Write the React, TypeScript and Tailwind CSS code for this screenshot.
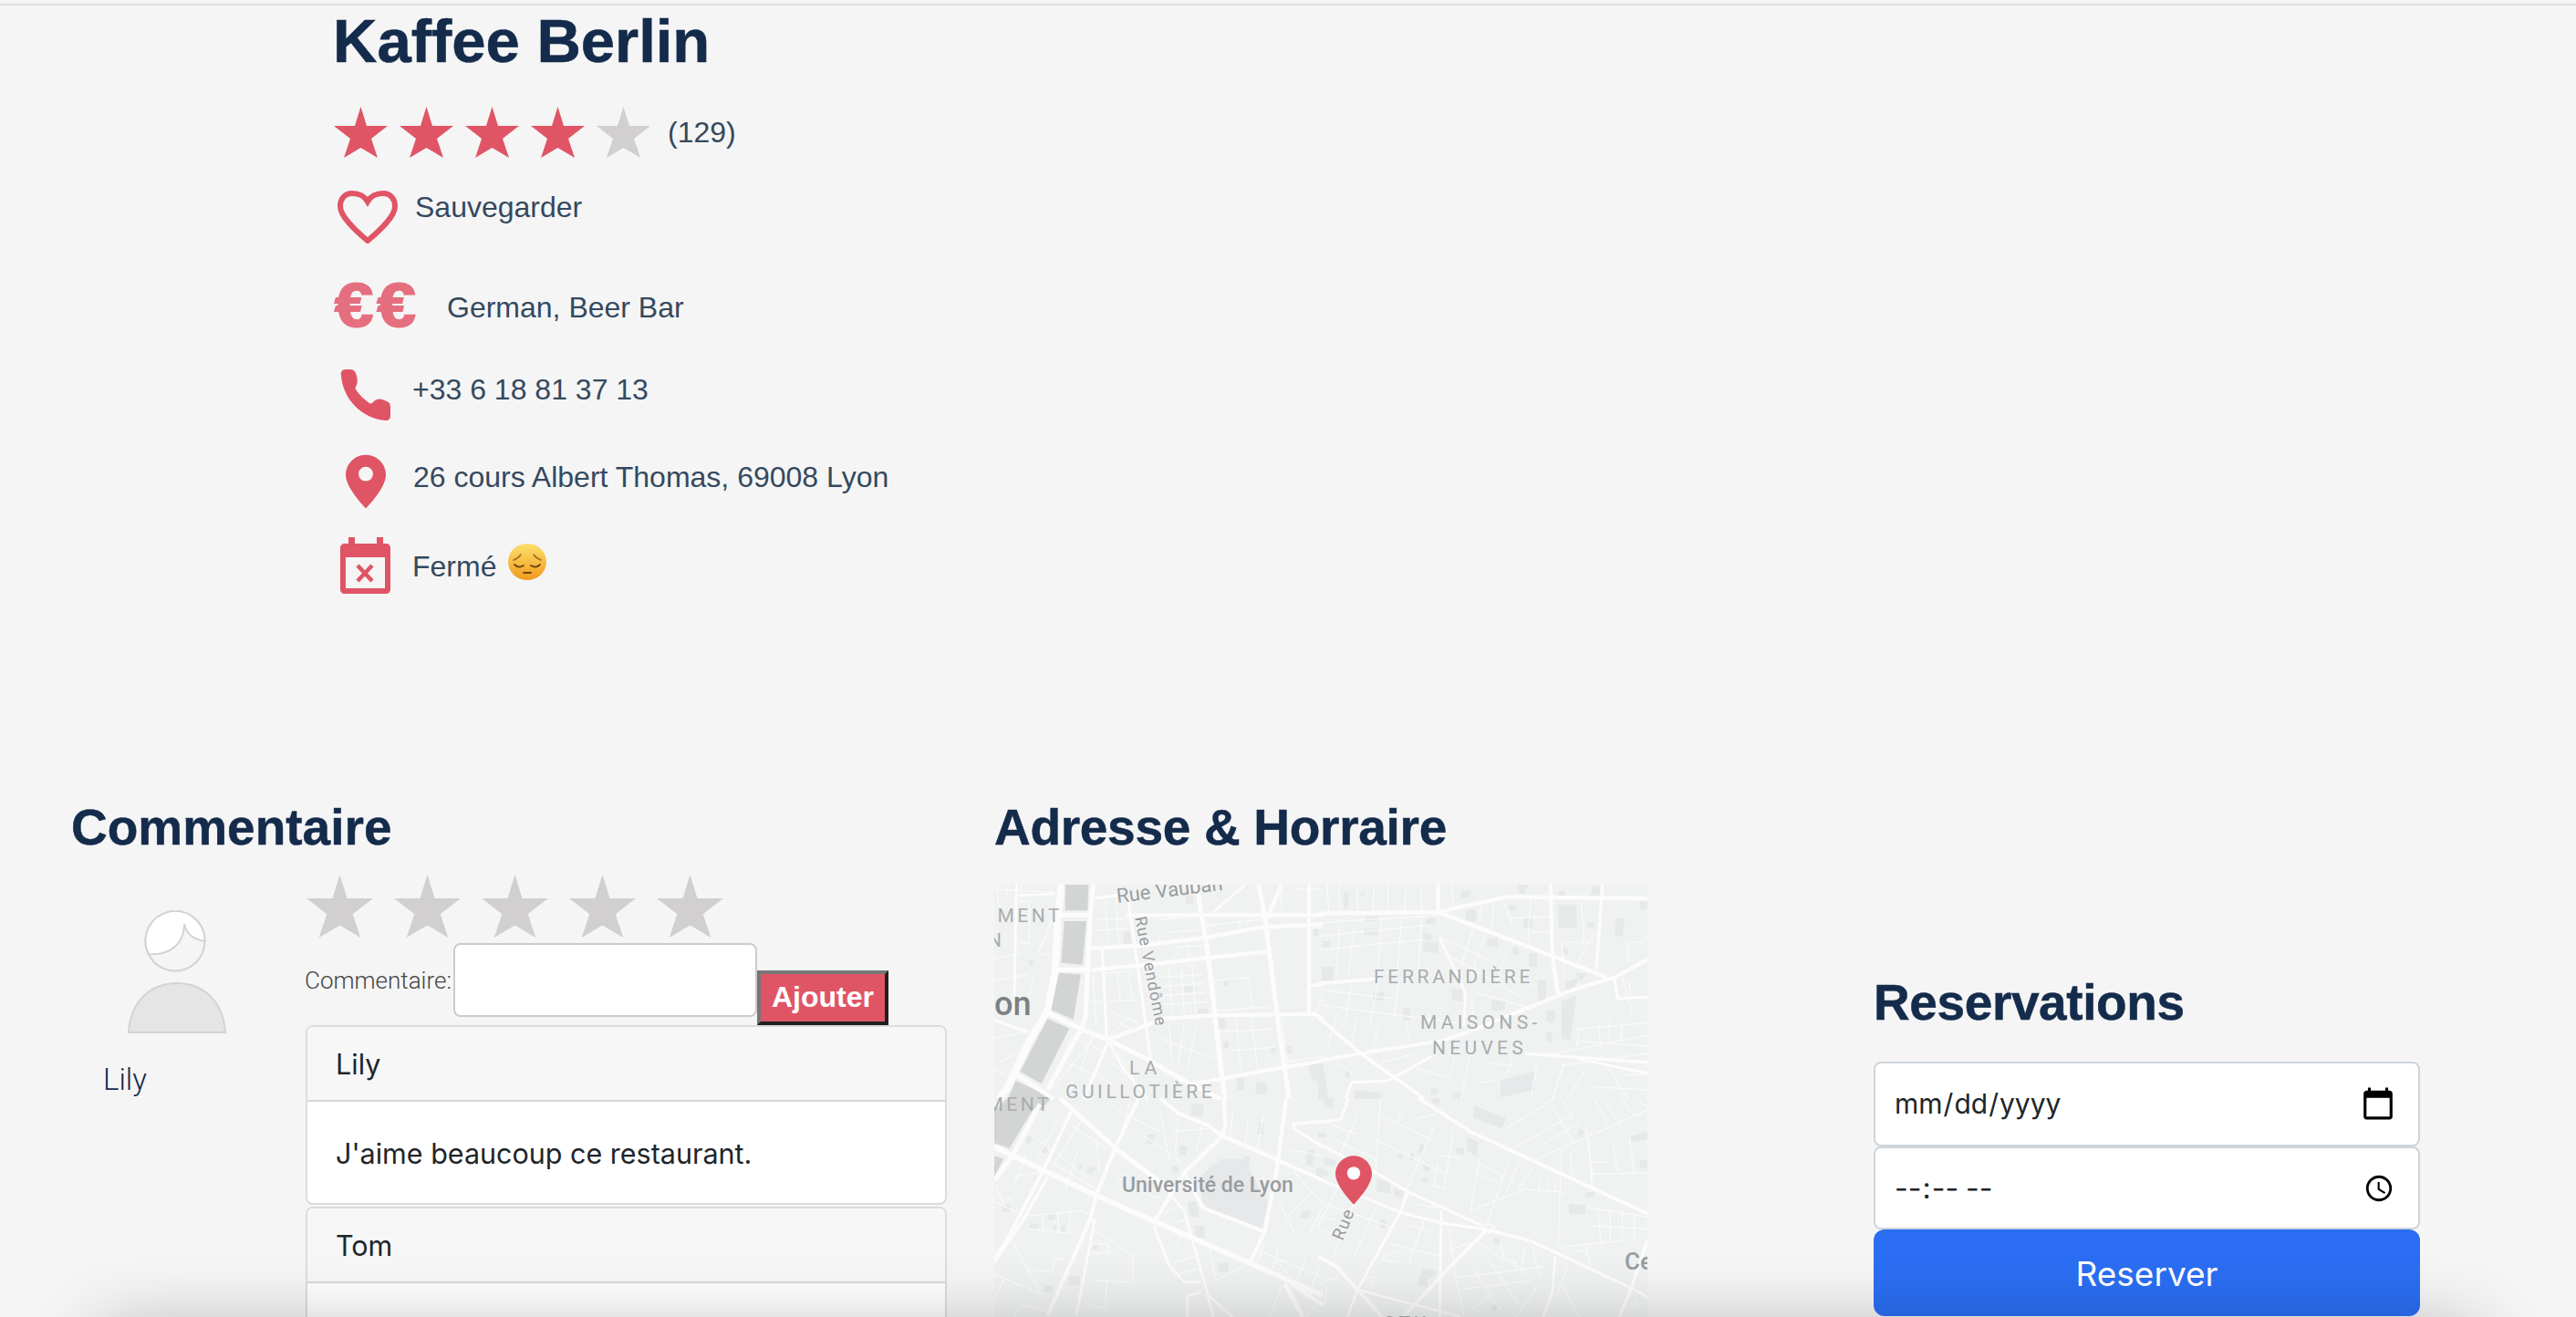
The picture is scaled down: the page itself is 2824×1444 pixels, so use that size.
import React from 'react'

const sans = "font-['Liberation_Sans',Arial,sans-serif]"
const ui = "font-['Inter','Liberation_Sans',sans-serif]"
const light = "font-['Roboto','Liberation_Sans',sans-serif] font-light"

function Star({ className }: { className: string }) {
  return (
    <svg viewBox="0 0 59 56" className={className}>
      <polygon points="29.5,0 36,21 59,21 41,35 48,56 29.5,45 11,56 18,35 0,21 23,21" fill="currentColor" />
    </svg>
  )
}

function Heart() {
  return (
    <svg viewBox="0 0 66 58" className="h-[58px] w-[66px] shrink-0">
      <path
        d="M33 12C29 5 22 3 16 3 8 3 3 9 3 17c0 12 17 27 30 38 13-11 30-26 30-38 0-8-5-14-13-14-6 0-13 2-17 9Z"
        fill="none"
        stroke="#e05565"
        strokeWidth="6"
      />
    </svg>
  )
}

function Phone() {
  return (
    <svg viewBox="0 0 55 56" className="h-[56px] w-[55px] shrink-0">
      <path
        d="M6 0h5c4 0 6 3 7 7 1 4 1 7 0 10-1 2-2 3-1 5 4 6 9 11 15 15 2 1 3 0 5-2 2-2 5-3 9-2l5 2c3 1 4 3 4 6v10c0 3-2 5-5 5C24 54 3 33 1 7 0 3 2 0 6 0Z"
        fill="#e05565"
      />
    </svg>
  )
}

function Pin({ className, hole }: { className: string; hole: string }) {
  return (
    <svg viewBox="0 0 24 32" className={className}>
      <path d="M12 0C5.4 0 0 5.3 0 12c0 8 12 20 12 20s12-12 12-20C24 5.3 18.6 0 12 0Z" fill="#e05565" />
      <circle cx="12" cy="11.4" r="4.3" fill={hole} />
    </svg>
  )
}

function CalendarClosed() {
  return (
    <svg viewBox="0 0 55 62" className="h-[62px] w-[55px] shrink-0">
      <path
        d="M9 0h7v7h24V0h7v7h3c3 0 5 2 5 5v45c0 3-2 5-5 5H5c-3 0-5-2-5-5V12c0-3 2-5 5-5h4V0Z"
        fill="#e05565"
      />
      <rect x="6" y="22" width="43" height="34" fill="#f5f5f5" />
      <path d="M19 31l16 17M35 31L19 48" stroke="#e05565" strokeWidth="4.5" />
    </svg>
  )
}

function Pensive() {
  return (
    <svg viewBox="0 0 42 40" className="ml-[13px] mt-[-7px] h-[40px] w-[42px]">
      <defs>
        <linearGradient id="face" x1="0" y1="0" x2="0" y2="1">
          <stop offset="0" stopColor="#fde06a" />
          <stop offset="1" stopColor="#f09a1e" />
        </linearGradient>
      </defs>
      <ellipse cx="21" cy="20" rx="21" ry="20" fill="url(#face)" />
      <path d="M6 18c3-1 6-3 8-6M36 18c-3-1-6-3-8-6" fill="none" stroke="#a5661a" strokeWidth="1.4" strokeLinecap="round" />
      <path d="M7 23c3 3 7 3 10 1M35 23c-3 3-7 3-10 1" fill="none" stroke="#6b4413" strokeWidth="1.8" strokeLinecap="round" />
      <path d="M17 32h8" stroke="#6b4413" strokeWidth="1.8" strokeLinecap="round" />
    </svg>
  )
}

function Avatar() {
  return (
    <svg viewBox="0 0 108 136" className="ml-[62px] mt-[39px] h-[136px] w-[108px]">
      <circle cx="52" cy="34" r="32.5" fill="none" stroke="#d3d3d3" strokeWidth="2" />
      <path d="M23 48C45 50 62 38 62 15c2 10 10 17 22.500 19A32.500 32.500 0 1 0 23 48Z" fill="#fff" stroke="#d3d3d3" strokeWidth="2" />
      <path d="M1 134c2-34 24-54 53-54s51 20 53 54Z" fill="#e5e5e5" stroke="#d3d3d3" strokeWidth="2" />
    </svg>
  )
}

type Quadrant = {
  dx: number
  dy: number
  buildings: string[]
  minor: string[]
  major: [number, string][]
}

// traced from the map, one block per quarter, in 3x crop units
const quadrants: Quadrant[] = [
  {
    dx: -5,
    dy: -5,
    buildings: [
      '645,50 670,50 670,78 645,78', '440,170 465,170 465,208 440,208', '130,262 145,262 145,282 130,282',
      '640,350 668,350 668,368 640,368', '685,422 718,422 718,438 685,438', '770,332 785,332 785,350 770,350',
      '748,455 775,455 775,488 748,488', '768,530 785,530 785,552 768,552', '925,548 942,548 942,568 925,568',
      '970,545 995,545 995,570 970,570', '1050,610 1095,600 1095,670 1060,655', '810,650 840,650 835,690 815,690',
      '875,665 910,665 910,705 875,705', '1065,160 1082,160 1082,185 1065,185',
    ],
    minor: [
      '590,290 600,440', '630,280 640,440', '665,275 678,440', '555,320 700,310', '560,350 705,340', '565,380 710,370', '570,410 715,400',
      '380,305 470,300', '420,305 430,400', '455,300 470,400', '390,400 480,395', '395,430 490,470', '400,510 470,440', '430,470 480,500',
      '735,330 850,320 865,420', '735,330 745,430', '745,430 925,415', '380,70 390,200', '415,65 425,210', '355,130 450,125', '355,165 450,160',
      '550,130 690,120', '560,170 560,210', '590,170 690,165', '600,260 650,210 655,250', '600,220 700,215', '710,150 890,130', '820,130 825,165', '710,130 730,170',
      '15,260 100,240', '15,330 130,310', '20,30 210,40', '100,70 130,70 130,210 100,205', '160,240 205,130 160,240 200,250', '150,300 130,380', '15,520 120,500', '30,600 110,560', '50,640 15,620',
      '750,460 770,640', '810,455 825,620', '860,450 880,610', '750,500 930,490', '800,560 940,550', '560,520 740,590', '590,470 600,610', '640,470 620,610', '680,480 650,620',
      '960,450 980,600', '960,600 1095,580', '1060,470 1095,380', '340,500 300,620', '280,520 370,560', '250,600 340,640', '210,680 350,510', '270,510 200,690', '400,600 450,640', '350,640 420,680', '420,560 500,700',
      '340,310 350,480', '330,400 370,400', '20,15 30,90', '60,15 55,60', '105,15 100,60', '960,15 960,100', '1060,160 1095,155', '1000,30 1095,30',
    ],
    major: [
      [23, '235,15 225,110 215,300 190,430 130,530 60,680 30,720'],
      [15, '340,15 330,130 322,300 315,450 300,490 190,690'],
      [15, '225,115 335,115'], [15, '215,295 330,295'], [15, '190,435 300,490 390,525 520,590 640,660 760,720'],
      [15, '90,640 210,720'], [10, '345,60 420,50'], [13, '335,225 500,215 700,190 900,155 1095,145'],
      [13, '335,295 550,275 720,255 910,235'], [13, '450,115 1095,115'], [15, '680,15 700,130 720,260 740,440 760,620 775,720'],
      [15, '885,15 905,120 920,240 945,440 970,620 985,720'], [13, '960,15 915,120'], [12, '1050,15 1050,440'], [8, '840,15 730,110'],
      [12, '390,525 510,480 570,455 740,445 1070,440 1095,455'], [9, '370,230 385,520'], [9, '455,60 530,590'], [10, '390,530 310,720'], [9, '390,530 440,620 520,720'],
      [12, '670,670 970,615 1095,595'], [10, '15,460 125,500'], [8, '88,15 80,440'], [10, '1055,345 1095,345'], [8, '95,50 215,45'],
    ],
  },
  {
    dx: 355,
    dy: -5,
    buildings: [
      '790,80 850,80 850,158 790,158', '85,40 100,40 100,95 85,95', '140,40 152,40 152,52 140,52', '470,35 505,35 490,60 470,60', '655,15 690,15 680,45 660,45',
      '905,20 930,20 925,55 895,55', '790,35 812,35 812,52 790,52', '485,100 520,95 520,140 485,130', '630,80 655,85 650,102 630,100', '675,125 705,125 705,155 675,155',
      '355,125 390,125 385,150 355,150', '345,170 380,180 370,200 345,195', '345,205 395,205 395,240 345,235', '155,120 195,120 195,135 155,135', '150,160 195,160 195,180 150,180',
      '15,200 38,200 38,222 15,222', '12,285 50,285 50,330 12,330', '180,370 218,370 218,395 180,395', '280,420 303,420 300,462 280,462', '440,355 475,360 475,400 440,395',
      '570,395 620,395 610,430 570,430', '720,330 750,330 750,400 725,400', '555,195 590,185 590,220 555,215', '640,220 660,220 660,245 640,245', '695,240 720,240 720,285 695,285',
      '800,400 850,380 830,530 800,520', '750,430 780,430 775,470 750,465', '750,500 770,500 770,535 750,530', '600,660 712,630 712,690 600,715', '980,125 1010,125 1000,185 975,185',
      '885,140 908,140 908,155 885,155', '805,225 820,225 825,245 810,245', '1055,70 1083,70 1083,95 1060,95', '815,335 860,320 840,360 815,360', '845,305 885,305 865,335', '90,630 105,630 105,648 90,648',
      '0,600 15,600 35,720 0,720', '120,690 205,700 205,720 120,720', '370,685 395,685 395,705 370,705', '440,700 470,700 470,720 440,720',
    ],
    minor: [
      '30,15 35,105', '70,15 70,105', '130,15 130,105', '185,15 180,105', '230,15 230,100', '290,15 285,100', '340,15 340,100', '440,15 445,90', '540,70 530,130', '580,60 570,160', '700,60 690,200',
      '0,140 400,115', '0,185 390,145', '0,230 350,195', '70,150 60,310', '120,150 100,310', '210,130 195,320', '275,125 260,310', '340,120 330,300', '0,360 250,390', '0,410 460,470',
      '110,340 90,460', '200,330 170,470', '265,330 250,450', '60,440 30,560', '125,460 110,540', '200,470 180,560', '290,470 300,530', '400,190 560,260', '510,160 470,280', '550,180 500,320',
      '620,240 580,350', '400,230 660,380', '520,370 690,420', '505,400 510,450', '620,310 720,350', '635,125 770,120', '610,70 640,150', '700,170 760,170', '800,205 910,205', '865,70 875,200',
      '800,205 810,300', '850,280 890,200 915,170', '1020,205 1060,205 1083,190', '1020,205 1020,270', '1000,320 1030,420 1030,440', '1020,330 1030,380', '845,490 1083,470', '860,490 850,550', '920,465 930,550', '960,460 955,540', '1000,470 995,530',
      '780,570 1083,510', '850,530 1083,545', '800,610 1083,570', '60,600 120,640', '210,600 320,570', '300,610 420,650', '450,580 430,650', '500,570 470,720', '640,590 620,640', '720,600 700,720', '810,600 770,720',
      '880,620 820,720', '950,610 1020,720', '1000,640 1083,640', '900,680 1083,690', '580,660 530,665', '550,600 640,610',
    ],
    major: [
      [13, '0,110 395,105 620,55 1083,60'], [13, '395,15 395,105'], [13, '395,105 770,250 950,320'], [12, '765,15 770,250 790,380'], [10, '935,15 915,295'],
      [12, '640,440 840,360 975,320 1083,262'], [9, '975,320 985,390 1083,385'], [11, '0,340 190,325'], [8, '400,190 485,370 480,480'],
      [11, '0,595 140,570 400,530 520,490 640,440'], [11, '0,450 140,570 350,720'], [9, '90,720 110,665 230,660 390,570'], [10, '680,570 1083,600'], [9, '860,590 1083,635'],
    ],
  },
  {
    dx: -5,
    dy: 234,
    buildings: [
      '700,340 690,260 760,200 835,200 915,345 895,430 730,375',
      '665,20 705,20 700,60 660,60', '520,120 545,120 535,150 515,150', '625,155 650,160 645,190 620,185', '885,80 900,80 900,120 880,120', '835,190 855,190 855,225 835,225',
      '120,125 140,125 135,150 120,150', '170,160 190,160 190,180 170,180', '320,225 350,230 335,250 320,245', '290,220 305,220 305,235 290,235', '190,380 215,375 215,400 190,400', '210,420 220,420 220,440 210,440',
      '235,420 250,420 250,445 235,445', '130,410 165,415 160,430 130,428', '40,350 70,350 65,375 40,375', '260,585 295,585 295,615 260,615', '180,615 210,620 200,640 180,635', '340,480 355,480 355,500 340,500',
      '670,420 705,420 710,460 680,460', '650,340 680,340 690,390 660,390', '750,545 785,540 785,570 755,570', '1045,170 1070,170 1060,225 1040,215', '1030,370 1060,370 1045,400 1020,390', '1075,230 1095,230 1095,260 1075,260', '600,225 620,225 625,245 600,245',
    ],
    minor: [
      '80,50 140,110', '150,30 110,130', '100,90 200,170', '230,60 160,190', '310,60 210,220', '270,90 390,170', '350,130 360,240', '220,180 320,260', '200,210 350,300', '290,170 250,300', '420,40 560,110', '460,20 430,130',
      '560,40 590,200', '620,70 610,180', '500,120 630,210', '450,190 560,280', '600,110 720,100', '700,90 680,170', '800,40 790,130', '850,60 840,160', '900,60 880,170', '790,130 940,190', '990,170 1095,190', '1000,240 1060,310 1095,340', '950,340 1000,440', '1060,310 990,380', '1050,450 1095,360',
      '120,180 80,290', '80,260 180,240', '15,340 100,380', '100,390 310,370 340,400', '175,380 175,440', '225,375 225,440', '265,375 260,445', '130,430 265,445', '340,430 470,520 470,605', '335,480 390,480 390,510 335,510', '335,600 470,605', '385,600 380,690 320,680',
      '75,470 170,650', '15,580 160,640', '15,660 50,590', '120,565 205,570 215,530 240,530', '105,680 180,700', '100,680 80,720', '400,300 450,250', '470,300 560,330', '610,490 635,450', '605,540 680,520', '615,580 690,560', '720,480 745,600', '745,600 860,540',
      '900,480 880,540', '950,490 930,560', '1040,530 1010,600', '1085,550 1060,620', '880,500 1095,590', '940,530 990,590', '960,620 920,720', '1040,650 1095,630', '1070,680 1040,720', '570,380 610,360', '610,410 640,400', '20,290 50,360', '50,340 80,320',
    ],
    major: [
      [17, '15,160 350,320 540,405 850,540 1095,650'], [15, '15,270 75,190 165,20'], [15, '230,0 420,170 540,260 600,315'], [11, '270,40 180,230 60,460 15,530'],
      [12, '490,0 410,170 350,320 330,400 190,715'], [8, '330,400 345,400 285,715'], [12, '560,0 620,50 720,90 765,125 960,210 1095,270'], [12, '770,0 775,90 765,125 640,245 545,400'],
      [12, '975,0 945,230 905,440 855,540'], [12, '640,245 700,360 905,440'], [8, '600,325 640,370 670,480 710,620 735,720'], [8, '540,420 590,550 640,605 695,605'], [8, '695,640 650,650 650,720'],
      [13, '970,610 1030,720'], [13, '990,610 1095,680'], [10, '1095,160 1000,100 1000,85 1095,75'], [10, '190,260 110,400 15,540'], [8, '720,650 800,720'],
    ],
  },
  {
    dx: 355,
    dy: 234,
    buildings: [
      '515,25 618,65 605,100 510,65', '20,0 50,0 50,30 20,30', '490,125 525,145 522,195 490,170', '455,165 480,165 480,185 455,185', '195,265 240,280 235,315 190,305', '250,295 285,310 275,330 250,320',
      '20,195 60,205 55,225 20,220', '0,235 35,240 30,258 0,250', '345,220 370,225 365,240 345,238', '340,260 362,262 360,275 340,272', '262,182 280,185 275,200 262,198', '305,180 318,182 312,205 302,203', '335,150 350,155 340,180 330,178',
      '825,348 878,352 878,382 825,380', '855,100 875,105 870,130 855,125', '1030,125 1083,110 1083,135 1030,145', '1058,205 1083,205 1083,230 1058,230', '880,310 912,310 905,325 880,325', '575,460 600,460 595,480 575,478', '205,400 225,400 220,430 205,428',
      '335,580 360,590 360,620 330,618', '340,560 390,570 380,590 340,585', '570,680 595,680 585,700 570,695', '375,0 405,0 395,25 375,15', '0,115 25,115 25,130 0,128',
    ],
    minor: [
      '130,60 70,190', '205,0 190,240', '0,70 130,120', '60,140 190,200', '380,95 280,330', '275,40 260,80', '390,50 320,70', '210,60 380,140', '180,130 420,250', '400,190 470,195', '395,215 380,290 420,300', '445,110 415,290',
      '530,200 500,380', '530,215 600,250', '525,250 590,280', '630,195 560,400', '500,370 680,300 810,310', '660,210 620,310', '705,230 660,300', '735,250 725,300', '755,260 755,305', '780,275 780,305', '800,170 790,480', '830,180 835,260',
      '650,160 830,60', '620,100 780,0', '740,150 860,80', '720,200 1083,40', '770,25 840,150', '840,70 800,0', '890,130 900,290', '880,100 905,270', '905,250 1083,245', '920,360 930,480', '960,365 960,470', '1000,370 1000,470', '1040,380 1040,470',
      '880,360 1083,390', '890,420 1083,430', '790,490 1000,470', '705,490 730,590', '880,480 895,550', '1025,135 1040,250', '970,160 985,240', '900,210 950,210', '950,20 1000,100', '1000,0 1040,60', '1040,0 1083,30', '905,0 950,80', '850,500 890,510',
      '0,390 50,400', '60,300 0,420', '120,340 50,520', '190,360 120,520', '0,340 260,430', '0,430 100,470', '260,500 210,530 260,540', '350,400 300,540', '300,420 380,440', '330,350 390,360', '240,480 400,520', '50,600 70,580', '0,610 60,590', '30,620 20,680', '150,590 185,590 170,625',
      '430,430 450,570 480,720', '520,470 700,590', '600,480 610,520 680,570', '640,525 650,550 660,525', '460,590 740,555', '510,560 600,700', '560,530 660,680', '470,630 700,600', '720,620 650,720', '820,560 780,660', '800,610 860,720', '580,640 500,700', '680,490 670,560',
      '430,500 520,470', '1040,660 1060,690 1040,690 1030,670',
    ],
    major: [
      [9, '0,150 180,240 300,310 540,420'], [9, '0,265 270,375 400,410 555,432 700,470 1030,625 1083,655'], [11, '330,0 500,110 1083,380'], [9, '295,310 270,375 130,630 95,720'], [8, '405,370 400,720'],
      [10, '555,432 400,590 280,720'], [7, '780,520 770,640 740,720'], [12, '0,520 60,555 130,630 210,720'], [8, '130,630 470,720'], [10, '1083,470 1030,625 990,720'], [9, '100,0 75,70 0,80'],
      [5, '555,412 580,425 565,445 540,430 555,412'],
    ],
  },
]

function CityMap() {
  return (
    <div className="mt-[31px] h-[500px] w-[716px] overflow-hidden">
      <svg viewBox="0 0 716 500" className="block h-[500px] w-[716px]" fill="none" strokeLinejoin="round">
        <rect width="716" height="500" fill="#f0f2f2" />
        {quadrants.map((q, i) => (
          <g key={i} transform={`translate(${q.dx} ${q.dy}) scale(0.3333)`}>
            {q.buildings.map((b, j) => (
              <polygon key={j} points={b} fill="#e6e8e9" />
            ))}
            {q.minor.map((m, j) => (
              <polyline key={j} points={m} stroke="#fcfcfc" strokeWidth="3" />
            ))}
          </g>
        ))}
        <g transform="translate(-5 -5) scale(0.3333)" fill="#d3d5d5">
          <polygon points="248,15 325,15 322,100 248,100" />
          <polygon points="245,135 318,135 305,278 235,272" />
          <polygon points="228,305 300,310 275,458 200,425" />
          <polygon points="190,455 262,488 170,670 100,630" />
          <polygon points="85,660 205,715 165,760 60,720" />
        </g>
        <g transform="translate(-5 234) scale(0.3333)" fill="#d3d5d5">
          <polygon points="15,40 60,0 165,0 65,165 15,148" />
          <polygon points="15,190 45,200 15,260" />
        </g>
        {quadrants.map((q, i) => (
          <g key={i} transform={`translate(${q.dx} ${q.dy}) scale(0.3333)`}>
            {q.major.map(([w, m], j) => (
              <polyline key={j} points={m} stroke="#fcfcfc" strokeWidth={w} />
            ))}
          </g>
        ))}
        <g className="font-['Roboto',sans-serif]" fill="#a9acad" fontSize="21">
          <text x="135" y="20" transform="rotate(-7 135 20)" fontSize="22" fill="#999d9e">Rue Vauban</text>
          <text x="75" y="41" textAnchor="end" letterSpacing="3.500">EMENT</text>
          <text x="8" y="68" textAnchor="end">N</text>
          <text x="0" y="143" fontSize="36" fontWeight="500" fill="#7b8182">on</text>
          <text x="154" y="36" transform="rotate(79 154 36)" fontSize="18" fill="#999d9e" letterSpacing="1">Rue Vendôme</text>
          <text x="148" y="208" letterSpacing="5">LA</text>
          <text x="78" y="234" letterSpacing="3.600">GUILLOTIÈRE</text>
          <text x="63" y="248" textAnchor="end" letterSpacing="3.500">MENT</text>
          <text x="140" y="337" fontSize="23" fontWeight="500" fill="#989d9f">Université de Lyon</text>
          <text x="416" y="108" letterSpacing="3.700">FERRANDIÈRE</text>
          <text x="467" y="158" letterSpacing="4.300">MAISONS-</text>
          <text x="480" y="186" letterSpacing="4.300">NEUVES</text>
          <text x="382" y="391" transform="rotate(-68 382 391)" fontSize="19" fill="#999d9e" letterSpacing="1">Rue</text>
          <text x="691" y="422" fontSize="26" fontWeight="500" fill="#989d9f">Ce</text>
          <text x="427" y="488" letterSpacing="4">STU</text>
        </g>
      </svg>
      <Pin className="relative top-[-204px] left-[374px] h-[56px] w-[40px]" hole="#ffffff" />
    </div>
  )
}

function CommentCard({ name, body }: { name: string; body: string }) {
  return (
    <div className="h-[197px] overflow-hidden rounded-lg border-2 border-[#dcdcdc] bg-white">
      <div className={`flex h-[82px] items-center border-b-2 border-[#d8d8d8] bg-[#f7f7f7] px-[31px] pt-[2px] text-[30.5px] text-[#212529] ${ui}`}>
        {name}
      </div>
      <div className={`flex h-[111px] items-center px-[31px] pt-[2px] text-[30.5px] text-[#212529] ${ui}`}>{body}</div>
    </div>
  )
}

export default function App() {
  return (
    <div className={`h-screen overflow-hidden bg-[#f5f5f5] pt-1 ${sans}`}>
      <div className="h-0.5 bg-[#dfe0e2]" />

      <div className="pl-[366px] text-[32px] leading-[36px] text-[#34495e]">
        <h1 className="ml-[-1px] mt-px text-[67px] font-bold leading-[76px] text-[#142b4b] [-webkit-text-stroke:0.6px_#142b4b]">Kaffee Berlin</h1>

        <div className="mt-[34px] flex h-[56px] items-start">
          <div className="flex gap-[13px]">
            <Star className="h-[56px] w-[59px] text-[#e05565]" />
            <Star className="h-[56px] w-[59px] text-[#e05565]" />
            <Star className="h-[56px] w-[59px] text-[#e05565]" />
            <Star className="h-[56px] w-[59px] text-[#e05565]" />
            <Star className="h-[56px] w-[59px] text-[#d1cfcf]" />
          </div>
          <span className="ml-[19px] mt-[10px]">(129)</span>
        </div>

        <div className="ml-1 mt-[36px] flex h-[58px] items-start gap-[19px]">
          <Heart />
          <span>Sauvegarder</span>
        </div>

        <div className="mt-[43px] flex h-[49px] items-start">
          <span className="ml-px inline-block w-[123px] origin-left scale-x-[1.1] text-[69px] font-bold leading-[49px] tracking-[4px] text-[#e56f7f] [-webkit-text-stroke:2px_#e56f7f]">€€</span>
          <span className="mt-[9px]">German, Beer Bar</span>
        </div>

        <div className="ml-[7px] mt-[46px] flex h-[56px] items-start gap-[24px]">
          <Phone />
          <span className="mt-[4px]">+33 6 18 81 37 13</span>
        </div>

        <div className="ml-[13px] mt-[37px] flex h-[60px] items-start gap-[30px]">
          <Pin className="h-[60px] w-[44px] shrink-0" hole="#f5f5f5" />
          <span className="mt-[7px]">26 cours Albert Thomas, 69008 Lyon</span>
        </div>

        <div className="ml-[7px] mt-[31px] flex h-[62px] items-start gap-[24px]">
          <CalendarClosed />
          <span className="mt-[14px] flex items-start">
            Fermé
            <Pensive />
          </span>
        </div>
      </div>

      <div className="mt-[224px] flex h-[585px] overflow-hidden pl-[78px]">
        <div className="w-[960px] shrink-0">
          <h2 className="text-[55px] font-bold leading-[64px] text-[#142b4b] [-webkit-text-stroke:0.5px_#142b4b]">Commentaire</h2>
          <div className="mt-[20px] flex">
            <div className="w-[257px] shrink-0">
              <Avatar />
              <p className={`ml-[35px] mt-[31px] text-[33px] leading-[38px] text-[#142b4b] ${light}`}>Lily</p>
            </div>
            <div className="flex-1">
              <div className="flex gap-[21px]">
                <Star className="h-[69px] w-[75px] text-[#d1cfcf]" />
                <Star className="h-[69px] w-[75px] text-[#d1cfcf]" />
                <Star className="h-[69px] w-[75px] text-[#d1cfcf]" />
                <Star className="h-[69px] w-[75px] text-[#d1cfcf]" />
                <Star className="h-[69px] w-[75px] text-[#d1cfcf]" />
              </div>
              <div className="mt-[6px] flex h-[90px] items-start">
                <label className={`ml-[-1px] mt-[25px] w-[163px] shrink-0 whitespace-nowrap text-[26px] leading-[32px] text-[#444444] ${light}`}>Commentaire:</label>
                <input className="h-[81px] w-[333px] rounded-lg border-2 border-[#cccccc] bg-white" />
                <button className={`mt-[30px] h-[60px] w-[144px] border-4 border-b-[#202020] border-l-[#767676] border-r-[#202020] border-t-[#767676] bg-[#e05565] pb-[3px] text-[32px] font-bold text-white ${sans}`}>
                  Ajouter
                </button>
              </div>
              <div className="flex flex-col gap-[2px]">
                <CommentCard name="Lily" body="J'aime beaucoup ce restaurant." />
                <CommentCard name="Tom" body="" />
              </div>
            </div>
          </div>
        </div>

        <div className="ml-[52px] w-[716px] shrink-0">
          <h2 className="text-[55px] font-bold leading-[64px] tracking-[-0.300px] text-[#142b4b] [-webkit-text-stroke:0.5px_#142b4b]">Adresse &amp; Horraire</h2>
          <CityMap />
        </div>

        <div className="ml-[248px] w-[599px] shrink-0 pt-[192px]">
          <h2 className="text-[55px] font-bold leading-[64px] tracking-[-0.400px] text-[#142b4b] [-webkit-text-stroke:0.5px_#142b4b]">Reservations</h2>
          <input
            type="date"
            className={`mt-[33px] block h-[93px] w-full rounded-lg border-2 border-[#ced4da] bg-white pl-[20px] pr-[24px] text-[30px] text-[#212529] [&::-webkit-calendar-picker-indicator]:h-[40px] [&::-webkit-calendar-picker-indicator]:w-[40px] [&::-webkit-calendar-picker-indicator]:p-0 ${ui}`}
          />
          <input
            type="time"
            className={`block h-[91px] w-full rounded-lg border-2 border-[#ced4da] bg-white pl-[20px] pr-[26px] text-[32px] text-[#212529] [&::-webkit-calendar-picker-indicator]:h-[34px] [&::-webkit-calendar-picker-indicator]:w-[34px] [&::-webkit-calendar-picker-indicator]:p-0 ${ui}`}
          />
          <button className={`block h-[95px] w-full rounded-xl bg-[#2b6ef3] pt-[2px] text-[37px] text-white ${ui}`}>Reserver</button>
        </div>
      </div>

      <div className="relative z-10 mx-[110px] h-[200px] bg-white shadow-[0_0_80px_rgba(0,0,0,0.3)]" />
    </div>
  )
}
